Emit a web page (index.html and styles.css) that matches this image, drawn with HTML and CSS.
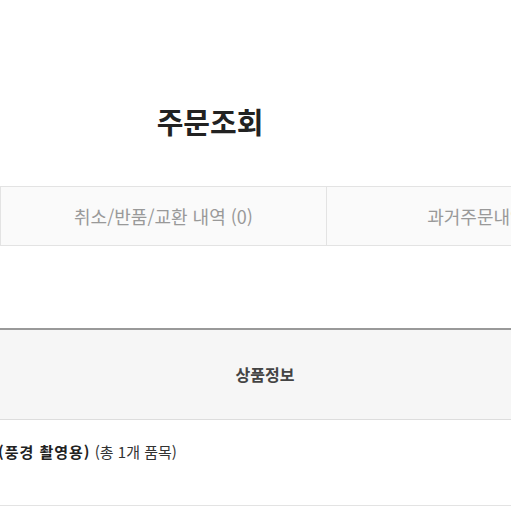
FILE: index.html
```html
<!DOCTYPE html>
<html lang="ko">
  <head>
    <meta charset="UTF-8" />
    <meta name="viewport" content="width=device-width, initial-scale=1.0" />
    <title>주문조회</title>
    <link rel="stylesheet" href="styles.css">
  </head>
  <body>
    <main class="page">
      <h2 class="title">주문조회</h2>

      <nav class="tabs">
        <a href="#" class="tab">취소/반품/교환 내역 (0)</a>
        <a href="#" class="tab">과거주문내역 (0)</a>
      </nav>

      <table class="orders">
        <thead>
          <tr>
            <th>상품정보</th>
          </tr>
        </thead>
        <tbody>
          <tr>
            <td>
              <strong>(풍경 촬영용)</strong> (총 1개 품목)
            </td>
          </tr>
        </tbody>
      </table>
    </main>
  </body>
</html>
```

FILE: styles.css
```css
* {
  margin: 0px;
  padding: 0px;
  box-sizing: border-box;
}

body {
  font-family: "Noto Sans CJK KR", "Noto Sans", sans-serif;
  color: #333;
  background: #fff;
  overflow: hidden;
}

.page {
  width: 800px;
}

/* 제목 */
.title {
  width: 420px;
  padding-top: 101px;
  text-align: center;
  font-size: 29px;
  line-height: 40px;
  font-weight: 700;
  color: #222;
}

/* 탭 */
.tabs {
  display: flex;
  margin-top: 45px;
  width: 654px;
  border-top: 1px solid #e3e3e3;
  border-bottom: 1px solid #e3e3e3;
  background-color: #fafafa;
}

.tabs a {
  width: 327px;
  height: 58px;
  display: flex;
  align-items: center;
  justify-content: center;
  text-decoration: none;
  font-size: 18px;
  color: #999;
}

.tabs a:first-child {
  border-left: 1px solid #e3e3e3;
  border-right: 1px solid #e3e3e3;
}

/* 주문 목록 */
.orders {
  margin-top: 82px;
  width: 530px;
  border-collapse: collapse;
  border-top: 2px solid #999;
}

.orders th {
  height: 90px;
  background-color: #f6f6f6;
  border-bottom: 1px solid #ddd;
  font-size: 16px;
  font-weight: 700;
  color: #444;
}

.orders td {
  height: 86px;
  vertical-align: top;
  padding-top: 21px;
  border-bottom: 1px solid #e3e3e3;
  font-size: 15px;
  color: #333;
}

.orders td strong {
  margin-left: -2px;
  letter-spacing: 1px;
  color: #222;
}
```
